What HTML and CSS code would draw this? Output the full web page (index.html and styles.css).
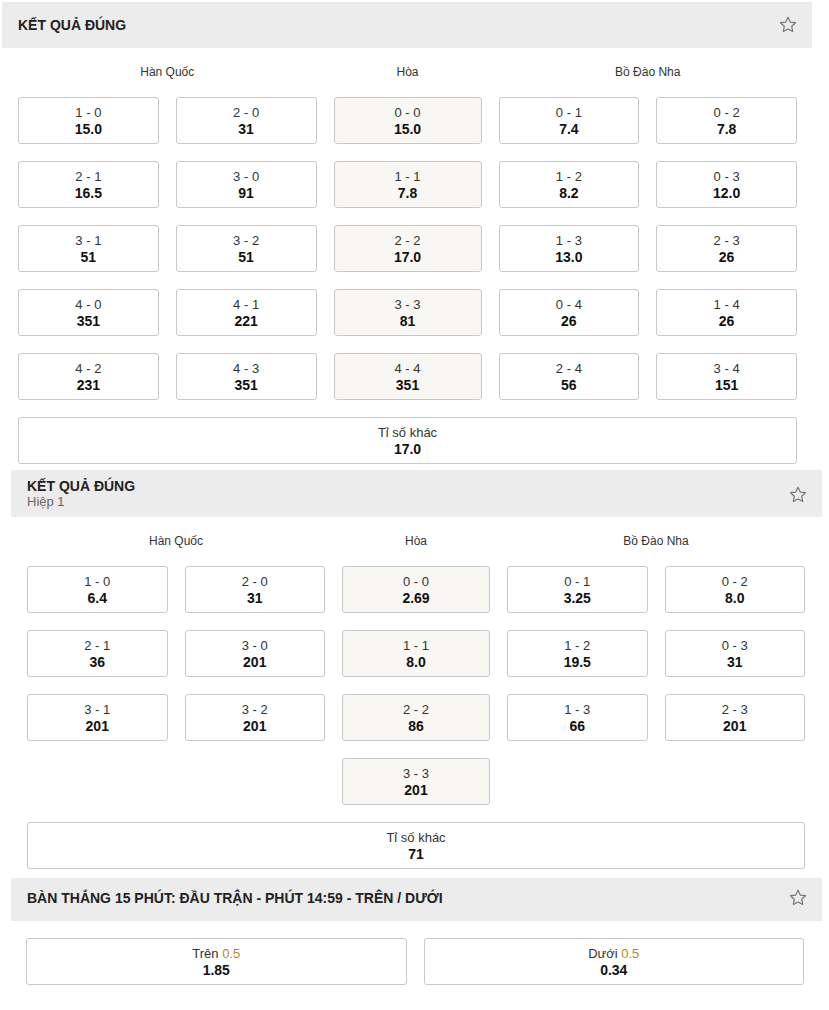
FILE: index.html
```html
<!DOCTYPE html>
<html lang="vi">
<head>
<meta charset="utf-8">
<title>Kết quả đúng</title>
<link rel="stylesheet" href="styles.css">
</head>
<body>
<section class="market m1">
  <div class="head">
    <div class="titles"><div class="title">KẾT QUẢ ĐÚNG</div></div>
    <svg class="star" viewBox="0 0 20 20" width="20" height="20"><path d="M10 2.2l2.3 4.9 5.2.6-3.8 3.6 1 5.2L10 14l-4.7 2.5 1-5.2-3.8-3.6 5.2-.6z" fill="none" stroke="#777" stroke-width="1.2" stroke-linejoin="round"/></svg>
  </div>
  <div class="body">
    <div class="grid">
      <div class="lbl span2">Hàn Quốc</div>
      <div class="lbl">Hòa</div>
      <div class="lbl span2">Bồ Đào Nha</div>

      <div class="odd"><span class="s">1 - 0</span><b>15.0</b></div>
      <div class="odd"><span class="s">2 - 0</span><b>31</b></div>
      <div class="odd draw"><span class="s">0 - 0</span><b>15.0</b></div>
      <div class="odd"><span class="s">0 - 1</span><b>7.4</b></div>
      <div class="odd"><span class="s">0 - 2</span><b>7.8</b></div>

      <div class="odd"><span class="s">2 - 1</span><b>16.5</b></div>
      <div class="odd"><span class="s">3 - 0</span><b>91</b></div>
      <div class="odd draw"><span class="s">1 - 1</span><b>7.8</b></div>
      <div class="odd"><span class="s">1 - 2</span><b>8.2</b></div>
      <div class="odd"><span class="s">0 - 3</span><b>12.0</b></div>

      <div class="odd"><span class="s">3 - 1</span><b>51</b></div>
      <div class="odd"><span class="s">3 - 2</span><b>51</b></div>
      <div class="odd draw"><span class="s">2 - 2</span><b>17.0</b></div>
      <div class="odd"><span class="s">1 - 3</span><b>13.0</b></div>
      <div class="odd"><span class="s">2 - 3</span><b>26</b></div>

      <div class="odd"><span class="s">4 - 0</span><b>351</b></div>
      <div class="odd"><span class="s">4 - 1</span><b>221</b></div>
      <div class="odd draw"><span class="s">3 - 3</span><b>81</b></div>
      <div class="odd"><span class="s">0 - 4</span><b>26</b></div>
      <div class="odd"><span class="s">1 - 4</span><b>26</b></div>

      <div class="odd"><span class="s">4 - 2</span><b>231</b></div>
      <div class="odd"><span class="s">4 - 3</span><b>351</b></div>
      <div class="odd draw"><span class="s">4 - 4</span><b>351</b></div>
      <div class="odd"><span class="s">2 - 4</span><b>56</b></div>
      <div class="odd"><span class="s">3 - 4</span><b>151</b></div>

      <div class="odd full"><span class="s">Tỉ số khác</span><b>17.0</b></div>
    </div>
  </div>
</section>

<section class="market m2">
  <div class="head">
    <div class="titles"><div class="title">KẾT QUẢ ĐÚNG</div><div class="sub">Hiệp 1</div></div>
    <svg class="star" viewBox="0 0 20 20" width="20" height="20"><path d="M10 2.2l2.3 4.9 5.2.6-3.8 3.6 1 5.2L10 14l-4.7 2.5 1-5.2-3.8-3.6 5.2-.6z" fill="none" stroke="#777" stroke-width="1.2" stroke-linejoin="round"/></svg>
  </div>
  <div class="body">
    <div class="grid">
      <div class="lbl span2">Hàn Quốc</div>
      <div class="lbl">Hòa</div>
      <div class="lbl span2">Bồ Đào Nha</div>

      <div class="odd"><span class="s">1 - 0</span><b>6.4</b></div>
      <div class="odd"><span class="s">2 - 0</span><b>31</b></div>
      <div class="odd draw"><span class="s">0 - 0</span><b>2.69</b></div>
      <div class="odd"><span class="s">0 - 1</span><b>3.25</b></div>
      <div class="odd"><span class="s">0 - 2</span><b>8.0</b></div>

      <div class="odd"><span class="s">2 - 1</span><b>36</b></div>
      <div class="odd"><span class="s">3 - 0</span><b>201</b></div>
      <div class="odd draw"><span class="s">1 - 1</span><b>8.0</b></div>
      <div class="odd"><span class="s">1 - 2</span><b>19.5</b></div>
      <div class="odd"><span class="s">0 - 3</span><b>31</b></div>

      <div class="odd"><span class="s">3 - 1</span><b>201</b></div>
      <div class="odd"><span class="s">3 - 2</span><b>201</b></div>
      <div class="odd draw"><span class="s">2 - 2</span><b>86</b></div>
      <div class="odd"><span class="s">1 - 3</span><b>66</b></div>
      <div class="odd"><span class="s">2 - 3</span><b>201</b></div>

      <div class="odd draw mid"><span class="s">3 - 3</span><b>201</b></div>

      <div class="odd full"><span class="s">Tỉ số khác</span><b>71</b></div>
    </div>
  </div>
</section>

<section class="market m3">
  <div class="head short">
    <div class="titles"><div class="title">BÀN THẮNG 15 PHÚT: ĐẦU TRẬN - PHÚT 14:59 - TRÊN / DƯỚI</div></div>
    <svg class="star" viewBox="0 0 20 20" width="20" height="20"><path d="M10 2.2l2.3 4.9 5.2.6-3.8 3.6 1 5.2L10 14l-4.7 2.5 1-5.2-3.8-3.6 5.2-.6z" fill="none" stroke="#777" stroke-width="1.2" stroke-linejoin="round"/></svg>
  </div>
  <div class="body ou">
    <div class="odd"><span class="s">Trên <span class="line">0.5</span></span><b>1.85</b></div>
    <div class="odd"><span class="s">Dưới <span class="line">0.5</span></span><b>0.34</b></div>
  </div>
</section>
</body>
</html>
```

FILE: styles.css
```css
* { box-sizing: border-box; }
html, body { margin: 0; padding: 0; background: #fff; }
body {
  font-family: "Liberation Sans", Arial, sans-serif;
  color: #222;
}

.market { width: 811px; }
.m1 { margin: 2px 0 0 2px; width: 810px; }
.m2 { margin: 0 0 0 11px; }
.m3 { margin: 0 0 0 11px; }

.head {
  background: #ececec;
  height: 46px;
  display: flex;
  align-items: center;
  justify-content: space-between;
  padding: 0 14px 0 16px;
}
.m2 .head { height: 47px; }
.head.short { height: 43px; padding-bottom: 3px; }
.titles { display: flex; flex-direction: column; }
.title {
  font-weight: bold;
  font-size: 14px;
  line-height: 16px;
  color: #222;
}
.sub {
  font-size: 13px;
  line-height: 16px;
  color: #666;
}
.star { display: block; }
.m2 .star { margin-top: 3px; }

.body { padding: 16px 15px 6px 16px; }
.m2 .body { padding: 16px 17px 9px 16px; }

.grid {
  display: grid;
  grid-template-columns: 1fr 1fr 148px 1fr 1fr;
  column-gap: 17px;
  row-gap: 17px;
}
.lbl {
  text-align: center;
  font-size: 12px;
  line-height: 16px;
  color: #333;
}
.span2 { grid-column: span 2; }

.odd {
  height: 47px;
  border: 1px solid #c8c8c8;
  border-radius: 3px;
  background: #fff;
  display: flex;
  flex-direction: column;
  align-items: center;
  justify-content: center;
  padding-top: 1px;
}
.odd.draw { background: #f8f7f3; }
.odd.mid { grid-column: 3; }
.odd.full { grid-column: 1 / -1; }
.s {
  font-size: 13px;
  line-height: 16px;
  color: #333;
}
.odd b {
  font-size: 14px;
  line-height: 16px;
  font-weight: bold;
  color: #111;
}
.line { color: #b8862f; }

.body.ou {
  display: grid;
  grid-template-columns: 1fr 1fr;
  column-gap: 17px;
  padding: 17px 18px 20px 15px;
}
```
